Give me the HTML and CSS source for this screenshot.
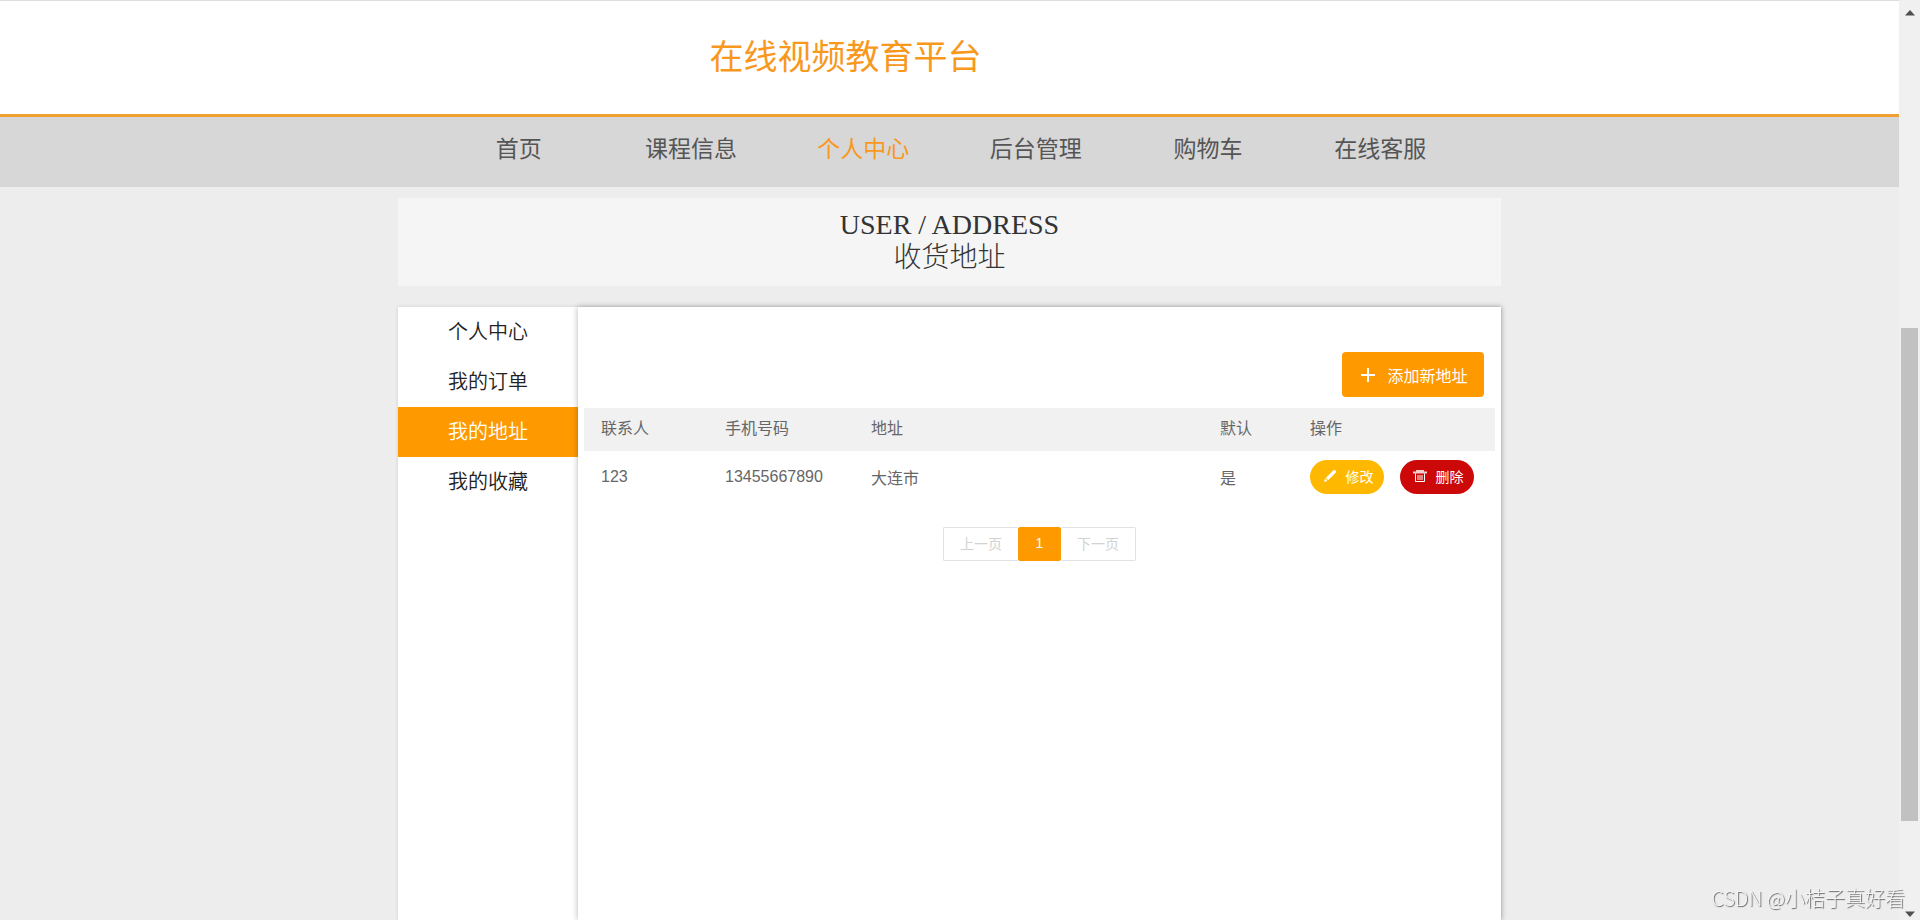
FILE: index.html
```html
<!DOCTYPE html>
<html lang="zh-CN">
<head>
<meta charset="utf-8">
<title>在线视频教育平台</title>
<link rel="stylesheet" href="styles.css">
</head>
<body>
<div class="page">
  <header class="header">
    <h1 class="site-title">在线视频教育平台</h1>
  </header>
  <nav class="nav">
    <ul class="nav-list">
      <li><a href="#">首页</a></li>
      <li><a href="#">课程信息</a></li>
      <li><a href="#" class="active">个人中心</a></li>
      <li><a href="#">后台管理</a></li>
      <li><a href="#">购物车</a></li>
      <li><a href="#">在线客服</a></li>
    </ul>
  </nav>
  <main class="container">
    <h2 class="banner"><span>USER / ADDRESS</span><span>收货地址</span></h2>
    <div class="panel">
      <aside class="sidebar">
        <a href="#">个人中心</a>
        <a href="#">我的订单</a>
        <a href="#" class="active">我的地址</a>
        <a href="#">我的收藏</a>
      </aside>
      <section class="content">
        <div class="toolbar">
          <button type="button" class="btn btn-add">
            <svg viewBox="0 0 16 16" width="16" height="16" aria-hidden="true"><path d="M8 1v14M1 8h14" stroke="currentColor" stroke-width="2" fill="none"/></svg>
            添加新地址
          </button>
        </div>
        <table class="table">
          <colgroup><col class="c-name"><col class="c-phone"><col class="c-address"><col class="c-default"><col class="c-action"></colgroup>
          <thead>
            <tr><th>联系人</th><th>手机号码</th><th>地址</th><th>默认</th><th>操作</th></tr>
          </thead>
          <tbody>
            <tr>
              <td>123</td><td>13455667890</td><td>大连市</td><td>是</td>
              <td>
                <div class="actions">
                  <button type="button" class="btn btn-edit">
                    <svg viewBox="0 0 14 14" width="14" height="14" aria-hidden="true"><path d="M1 13l1-3.400 2.400 2.400zM2.700 8.900L10.200 1.400q1-.9 2-.1l.5.5q.8 1-.1 2L5.100 11.300z" fill="currentColor"/></svg>
                    修改
                  </button>
                  <button type="button" class="btn btn-delete">
                    <svg viewBox="0 0 14 14" width="14" height="14" aria-hidden="true"><path d="M3 1h8v2H3zM0 2.500h14v2H0z" fill="currentColor" opacity=".8"/><path d="M2.500 4.500v8h9v-8M5 6v5M7 6v5M9 6v5" stroke="currentColor" fill="none"/></svg>
                    删除
                  </button>
                </div>
              </td>
            </tr>
          </tbody>
        </table>
        <div class="pagination">
          <button type="button" class="prev" disabled>上一页</button>
          <button type="button" class="current">1</button>
          <button type="button" class="next" disabled>下一页</button>
        </div>
      </section>
    </div>
  </main>
</div>
<div class="scrollbar" aria-hidden="true">
  <svg viewBox="0 0 10 6" width="10" height="6"><path d="M0 5.500L5 0l5 5.500z" fill="#505050"/></svg>
  <div class="track"><div class="thumb"></div></div>
  <svg viewBox="0 0 10 6" width="10" height="6"><path d="M0 .5L5 6l5-5.500z" fill="#505050"/></svg>
</div>
<div class="watermark">CSDN @小桔子真好看</div>
</body>
</html>
```
FILE: styles.css
```css
* {
  box-sizing: border-box;
}

body {
  margin: 0;
  display: flex;
  height: 100vh;
  overflow: hidden;
  background: #ededed;
  color: #666;
  font-family: "Liberation Sans", "Noto Sans CJK SC", sans-serif;
  font-size: 16px;
}

a {
  color: inherit;
  text-decoration: none;
}

button {
  font: inherit;
  cursor: pointer;
}

.page {
  flex: 1;
  display: flex;
  flex-direction: column;
  min-width: 0;
}

.header {
  padding: 32px 0;
  background: #fff;
  border-top: 1px solid #ddd;
  border-bottom: 3px solid #f0a030;
}

.site-title {
  max-width: 1103px;
  margin: 0 auto;
  padding-right: 208px;
  color: #f8981d;
  font-size: 34px;
  font-weight: 400;
  line-height: 49px;
  text-align: center;
}

.nav {
  background: #d7d7d7;
}

.nav-list {
  display: flex;
  max-width: 1034px;
  margin: 0 auto;
  padding: 0;
  list-style: none;
}

.nav-list li {
  flex: 1;
}

.nav-list a {
  display: block;
  padding-bottom: 6px;
  color: #555;
  font-size: 23px;
  font-weight: 400;
  line-height: 64px;
  text-align: center;
}

.nav-list .active {
  color: #f8981d;
}

.container {
  flex: 1;
  display: flex;
  flex-direction: column;
  width: 100%;
  max-width: 1103px;
  margin: 0 auto;
}

.banner {
  display: flex;
  flex-direction: column;
  margin: 11px 0 21px;
  padding: 10px 0 12px;
  background: #f5f5f5;
  color: #333;
  font-family: "Liberation Serif", "Noto Sans CJK SC", serif;
  font-size: 28px;
  font-weight: 300;
  line-height: 33px;
  text-align: center;
}

.panel {
  flex: 1;
  display: flex;
  background: #fff;
  box-shadow: 0 0 3px rgba(0, 0, 0, 0.15);
}

.sidebar {
  width: 180px;
}

.sidebar a {
  display: block;
  color: #222;
  font-size: 20px;
  font-weight: 350;
  line-height: 50px;
  text-align: center;
}

.sidebar .active {
  background: #ff9900;
  color: #fff;
}

.content {
  flex: 1;
  padding: 45px 6px 0;
  background: #fff;
  box-shadow: 0 0 6px rgba(0, 0, 0, 0.3);
}

.toolbar {
  display: flex;
  justify-content: flex-end;
  padding: 0 11px 11px;
}

.btn {
  display: flex;
  align-items: center;
  justify-content: center;
  padding: 0;
  border: 0;
  color: #fff;
}

.btn-add {
  gap: 11px;
  width: 142px;
  height: 45px;
  padding-left: 2px;
  border-radius: 4px;
  background: #ff9900;
}

.table {
  width: 100%;
  table-layout: fixed;
  border-collapse: collapse;
}

.c-name { width: 124px; }
.c-phone { width: 146px; }
.c-default { width: 90px; }
.c-action { width: 202px; }

.table th,
.table td {
  padding: 0 0 2px 17px;
  font-weight: 400;
  text-align: left;
}

.table th {
  height: 43px;
  padding-bottom: 5px;
  background: #f1f1f1;
}

.table td {
  height: 54px;
}

.actions {
  display: flex;
  gap: 16px;
}

.btn-edit,
.btn-delete {
  gap: 9px;
  width: 74px;
  height: 34px;
  padding: 0 0 2px 2px;
  border-radius: 17px;
  font-size: 14px;
}

.btn-edit {
  background: #ffb800;
}

.btn-delete {
  background: #cc0808;
}

.pagination {
  display: flex;
  justify-content: center;
  margin-top: 22px;
}

.pagination button {
  width: 75px;
  height: 34px;
  padding: 0 0 3px;
  border: 1px solid #e2e2e2;
  background: #fff;
  color: #d2d2d2;
  font-size: 14px;
}

.pagination .prev {
  border-right: 0;
  border-radius: 2px 0 0 2px;
}

.pagination .next {
  border-left: 0;
  border-radius: 0 2px 2px 0;
}

.pagination .current {
  width: 43px;
  border-color: #ff9900;
  border-radius: 2px;
  background: #ff9900;
  color: #fff;
}

.scrollbar {
  display: flex;
  flex-direction: column;
  align-items: center;
  width: 21px;
  padding: 10px 0 3px;
  background: #f0f0f0;
}

.track {
  flex: 1;
  display: flex;
  flex-direction: column;
  width: 17px;
}

.track::before {
  content: "";
  flex: 312;
}

.track::after {
  content: "";
  flex: 90;
}

.thumb {
  flex: 493;
  background: #c1c1c1;
}

.watermark {
  position: fixed;
  right: 15px;
  bottom: 8px;
  color: #f4f4f4;
  font-family: "Noto Sans CJK SC", sans-serif;
  font-size: 20px;
  font-weight: 300;
  line-height: 28px;
  text-shadow: 1px 1px 1px #666;
}
```
